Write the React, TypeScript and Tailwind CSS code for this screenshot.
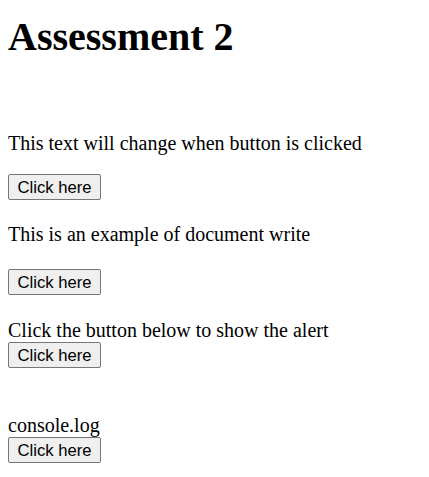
import React from "react";

function Btn() {
  return (
    <button
      type="button"
      className="block w-[93px] h-[26px] bg-[#efefef] border border-[#767676] rounded-[2px] text-black text-[16.67px] leading-[19px] text-center p-0"
      style={{ fontFamily: '"Liberation Sans", Arial, sans-serif' }}
    >
      Click here
    </button>
  );
}

export default function App() {
  return (
    <div
      className="bg-white text-black min-h-[477px] px-2 pt-px"
      style={{ fontFamily: '"Liberation Serif", "Times New Roman", serif' }}
    >
      <h1 className="mt-[13px] text-[40px] leading-[46px] font-bold">Assessment 2</h1>
      <p className="mt-[72px] text-[20px] leading-[23px]">This text will change when button is clicked</p>
      <div className="mt-[19px]">
        <Btn />
      </div>
      <p className="mt-[23px] text-[20px] leading-[23px]">This is an example of document write</p>
      <div className="mt-[23px]">
        <Btn />
      </div>
      <p className="mt-[24px] text-[20px] leading-[23px]">Click the button below to show the alert</p>
      <Btn />
      <p className="mt-[46px] text-[20px] leading-[23px]">console.log</p>
      <Btn />
    </div>
  );
}
